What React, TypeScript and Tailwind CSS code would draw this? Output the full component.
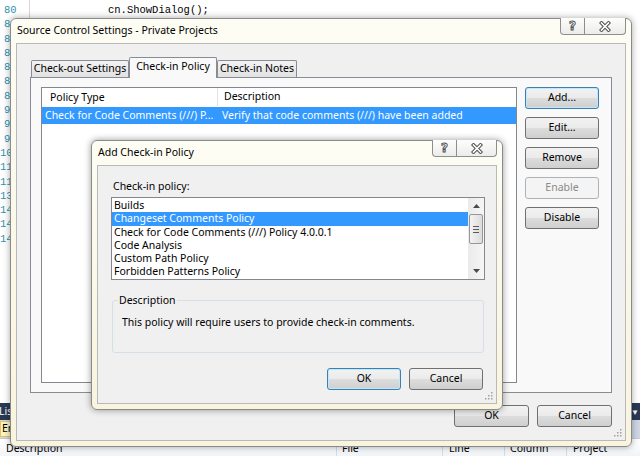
import React from "react";
import clsx from "clsx";

const ui = "font-['Noto_Sans',sans-serif] text-[10.5px] text-black";

const lineNumbers = ["80", "81", "82", "83", "84", "85", "86", "90", "93", "96", "100", "110", "111", "130", "140", "141", "142"];

const policies = [
  "Builds",
  "Changeset Comments Policy",
  "Check for Code Comments (///) Policy 4.0.0.1",
  "Code Analysis",
  "Custom Path Policy",
  "Forbidden Patterns Policy",
];

function Button({
  children,
  primary,
  disabled,
  className,
}: {
  children: React.ReactNode;
  primary?: boolean;
  disabled?: boolean;
  className?: string;
}) {
  return (
    <div
      className={clsx(
        "flex h-[22px] items-center justify-center rounded-[3px] border",
        disabled
          ? "border-[#adb2b5] bg-[#f4f4f4] text-[#8a8a8a]"
          : "bg-[linear-gradient(to_bottom,#f2f2f2_0%,#ebebeb_48%,#dddddd_50%,#cfcfcf_100%)]",
        primary && "border-[#3c7fb1] shadow-[inset_0_0_0_1px_#bfe9fb]",
        !primary && !disabled && "border-[#707070]",
        className
      )}
    >
      {children}
    </div>
  );
}

// help + close buttons hanging from the top edge of a window frame
function CaptionButtons({ closeWidth }: { closeWidth: string }) {
  return (
    <div className="-mt-px ml-auto flex self-start">
      <div className="flex h-[17px] w-[25px] items-center justify-center rounded-bl-[4px] border border-t-0 border-[#8e8e8e] bg-[linear-gradient(to_bottom,#fdfdfb,#ececea)]">
        <span className="text-[12px] font-bold leading-none text-white [-webkit-text-stroke:0.9px_#4a4a4a] font-['DejaVu_Sans',sans-serif]">?</span>
      </div>
      <div
        className={clsx(
          "flex h-[17px] items-center justify-center rounded-br-[4px] border border-l-0 border-t-0 border-[#8e8e8e] bg-[linear-gradient(to_bottom,#fdfdfb,#ececea)]",
          closeWidth
        )}
      >
        <svg width="12" height="11" viewBox="0 0 12 11">
          <path d="M2.5 2 L9.5 9 M9.5 2 L2.5 9" stroke="#4f4f4f" strokeWidth="3.6" strokeLinecap="square" />
          <path d="M2.5 2 L9.5 9 M9.5 2 L2.5 9" stroke="#ffffff" strokeWidth="1.6" strokeLinecap="square" />
        </svg>
      </div>
    </div>
  );
}

function Grip() {
  return (
    <svg className="absolute bottom-[2px] right-[2px]" width="10" height="10" viewBox="0 0 10 10">
      {[
        [8, 2],
        [8, 5],
        [5, 5],
        [8, 8],
        [5, 8],
        [2, 8],
      ].map(([x, y]) => (
        <rect key={`${x}-${y}`} x={x - 1} y={y - 1} width="1.5" height="1.5" fill="#a0a0a0" />
      ))}
    </svg>
  );
}

function Tab({ label, width, active }: { label: string; width: string; active?: boolean }) {
  return (
    <div
      className={clsx(
        "flex items-center justify-center rounded-t-[2px] border border-[#898c95]",
        width,
        active
          ? "relative z-10 -mb-px h-[21px] border-b-0 bg-[#f9f9f9] pb-[2px]"
          : "h-[17px] border-b-0 bg-[linear-gradient(to_bottom,#f3f3f3,#e1e1e1)]"
      )}
    >
      {label}
    </div>
  );
}

function Scrollbar() {
  return (
    <div className="flex w-[16px] flex-col items-center bg-[linear-gradient(to_right,#eaeaea,#f6f6f6)]">
      <div className="flex h-[16px] items-center justify-center">
        <svg width="7" height="4" viewBox="0 0 7 4">
          <path d="M0 4 L3.5 0 L7 4 Z" fill="#4a4a4a" />
        </svg>
      </div>
      <div className="flex h-[30px] w-[14px] flex-col items-center justify-center gap-[2px] rounded-[2px] border border-[#979797] bg-[linear-gradient(to_right,#f3f3f3,#dcdcdc)]">
        <div className="h-px w-[6px] bg-[#5a5a5a]" />
        <div className="h-px w-[6px] bg-[#5a5a5a]" />
        <div className="h-px w-[6px] bg-[#5a5a5a]" />
      </div>
      <div className="mt-auto flex h-[16px] items-center justify-center">
        <svg width="7" height="4" viewBox="0 0 7 4">
          <path d="M0 0 L7 0 L3.5 4 Z" fill="#4a4a4a" />
        </svg>
      </div>
    </div>
  );
}

function SourceControlSettings() {
  return (
    <div className="absolute left-[10px] top-[18px] flex h-[429px] w-[622px] flex-col rounded-[6px] border border-[#8a8a8a] bg-[linear-gradient(to_bottom,#fdfdf4,#f9f4dd)] px-[5px] pb-[5px] shadow-[0_0_7px_rgba(0,0,0,0.35)]">
      <div className="flex h-[24px] items-center pl-px">
        <span>Source Control Settings - Private Projects</span>
        <CaptionButtons closeWidth="w-[41px]" />
      </div>

      <div className="relative flex flex-1 flex-col border border-[#b9b9b9] bg-[#f0f0f0] px-[13px] pb-[13px] pt-[13px]">
        <div className="flex h-[20px] items-end pl-px">
          <Tab label="Check-out Settings" width="w-[98px]" />
          <Tab label="Check-in Policy" width="w-[88px]" active />
          <Tab label="Check-in Notes" width="w-[80px]" />
        </div>

        <div className="flex flex-1 gap-[8px] border border-[#898c95] bg-[#f9f9f9] pb-[9px] pl-[10px] pr-[12px] pt-[9px]">
          <div className="flex-1 border border-[#828790] bg-white">
            <div className="flex h-[18px] items-center">
              <div className="w-[176px] border-r border-[#e3e3e3] pl-[8px] leading-[18px]">Policy Type</div>
              <div className="pl-[6px]">Description</div>
            </div>
            <div className="mt-px flex h-[17px] items-center bg-[#3399ff] text-white">
              <div className="w-[176px] whitespace-nowrap pl-[3px]">Check for Code Comments (///) P...</div>
              <div className="whitespace-nowrap pl-[4px]">Verify that code comments (///) have been added</div>
            </div>
          </div>

          <div className="flex w-[74px] flex-col gap-[8px]">
            <Button primary>Add...</Button>
            <Button>Edit...</Button>
            <Button>Remove</Button>
            <Button disabled>Enable</Button>
            <Button>Disable</Button>
          </div>
        </div>

        <div className="mt-[12px] flex justify-end gap-[8px]">
          <Button className="w-[75px]">OK</Button>
          <Button className="w-[75px]">Cancel</Button>
        </div>
        <Grip />
      </div>
    </div>
  );
}

function AddCheckInPolicy() {
  return (
    <div className="absolute left-[91px] top-[140px] flex h-[270px] w-[412px] flex-col rounded-[6px] border border-[#8a8a8a] bg-[linear-gradient(to_bottom,#fdfdf4,#f9f4dd)] px-[5px] pb-[5px] shadow-[0_0_7px_rgba(0,0,0,0.4)]">
      <div className="flex h-[24px] items-center pl-px">
        <span>Add Check-in Policy</span>
        <CaptionButtons closeWidth="w-[40px]" />
      </div>

      <div className="relative flex flex-1 flex-col border border-[#b9b9b9] bg-[#f0f0f0] pl-[13px] pr-[11px] pt-[12px]">
        <div className="mb-[3px] h-[16px] pl-[2px] leading-[16px]">Check-in policy:</div>

        <div className="flex h-[83px] border border-[#828790] bg-white">
          <div className="flex-1 overflow-hidden pt-px">
            {policies.map((p, i) => (
              <div
                key={p}
                className={clsx(
                  "h-[13.3px] whitespace-nowrap pl-[2px] leading-[13.3px]",
                  i === 1 && "bg-[#3399ff] text-white"
                )}
              >
                {p}
              </div>
            ))}
          </div>
          <Scrollbar />
        </div>

        <fieldset className="mx-px mt-[13px] h-[60px] rounded-[3px] border border-[#d5dfe5]">
          <legend className="ml-[5px] px-px leading-[14px]">Description</legend>
          <p className="pl-[9px] pt-[8px] leading-[14px]">This policy will require users to provide check-in comments.</p>
        </fieldset>

        <div className="mt-[15px] flex justify-end gap-[8px] pr-[2px]">
          <Button primary className="w-[74px]">OK</Button>
          <Button className="w-[74px]">Cancel</Button>
        </div>
        <Grip />
      </div>
    </div>
  );
}

export default function App() {
  return (
    <div className={clsx("relative flex h-[456px] w-[640px] flex-col overflow-hidden bg-white", ui)}>
      {/* code editor behind the dialogs */}
      <div className="flex h-[403px] font-['Liberation_Mono',monospace] text-[10.5px]">
        <div className="w-[30px] border-r border-[#d8d8d8] pt-[3px] text-[#2b91af]">
          {lineNumbers.map((n) => (
            <div key={n} className={clsx("h-[14.3px] leading-[14.3px]", n.length === 2 && "pl-[4px]")}>
              {n}
            </div>
          ))}
        </div>
        <div className="pl-[78px] pt-[3px] leading-[14.3px]">cn.ShowDialog();</div>
      </div>

      {/* error list tool window */}
      <div className="flex h-[17px] items-center justify-between bg-[#293955] text-white">
        <span className="-ml-px">List</span>
        <span className="pr-[1px] text-[8px]">▼</span>
      </div>
      <div className="flex h-[18px] items-center bg-[#cfd7e5]">
        <div className="flex h-[16px] items-center border border-[#e5c365] bg-[#fdf4bf] pl-px pr-[20px]">Errors</div>
      </div>
      <div className="flex h-[18px] overflow-hidden border-t border-[#c5cdd8] bg-[linear-gradient(to_bottom,#ffffff,#f1f4f8)] pt-[2px] leading-[14px]">
        <div className="w-[337px] border-r border-[#d5dce6] pl-[6px]">Description</div>
        <div className="w-[106px] border-r border-[#d5dce6] pl-[5px]">File</div>
        <div className="w-[62px] border-r border-[#d5dce6] pl-[6px]">Line</div>
        <div className="w-[62px] border-r border-[#d5dce6] pl-[5px]">Column</div>
        <div className="pl-[6px]">Project</div>
      </div>

      <SourceControlSettings />
      <AddCheckInPolicy />
    </div>
  );
}
